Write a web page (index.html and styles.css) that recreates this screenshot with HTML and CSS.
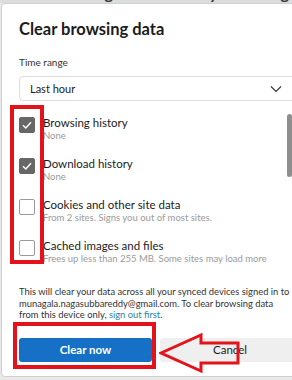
FILE: index.html
```html
<!DOCTYPE html>
<html>
<head>
<meta charset="utf-8">
<link rel="stylesheet" href="styles.css">
</head>
<body>
<div class="page">
  <div class="backdrop-top"><span class="avatar"></span><span class="bg-text">Hi Naga Subba Reddy! We are glad</span></div>
  <div class="dialog">
    <h1 class="title">Clear browsing data</h1>
    <div class="field-label">Time range</div>
    <div class="select">
      <span class="select-value">Last hour</span>
      <svg class="chev" width="12" height="8" viewBox="0 0 12 8"><path d="M1 1.5 L6 6.5 L11 1.5" fill="none" stroke="#333" stroke-width="1.1"/></svg>
    </div>
    <div class="list">
      <div class="row">
        <span class="cb checked"><svg width="16" height="16" viewBox="0 0 16 16"><path d="M4 8.2 L6.8 11 L12 5.2" fill="none" stroke="#fff" stroke-width="1.4"/></svg></span>
        <div class="row-text"><div class="row-title">Browsing history</div><div class="row-sub">None</div></div>
      </div>
      <div class="row">
        <span class="cb checked"><svg width="16" height="16" viewBox="0 0 16 16"><path d="M4 8.2 L6.8 11 L12 5.2" fill="none" stroke="#fff" stroke-width="1.4"/></svg></span>
        <div class="row-text"><div class="row-title">Download history</div><div class="row-sub">None</div></div>
      </div>
      <div class="row">
        <span class="cb"></span>
        <div class="row-text"><div class="row-title">Cookies and other site data</div><div class="row-sub">From 2 sites. Signs you out of most sites.</div></div>
      </div>
      <div class="row">
        <span class="cb"></span>
        <div class="row-text"><div class="row-title">Cached images and files</div><div class="row-sub">Frees up less than 255 MB. Some sites may load more</div></div>
      </div>
      <div class="scroll-thumb"></div>
    </div>
    <p class="note">This will clear your data across all your synced devices signed in to<br>munagala.nagasubbareddy@gmail.com. To clear browsing data<br>from this device only, <a class="link">sign out first</a>.</p>
    <div class="buttons">
      <button class="btn primary">Clear now</button>
      <button class="btn secondary">Cancel</button>
    </div>
    <div class="mark mark-checks"></div>
    <div class="mark mark-button"></div>
    <svg class="arrow" width="82" height="42" viewBox="0 0 82 42"><path d="M2 21 L42 3 L42 11 L79 11 L79 31 L42 31 L42 39 Z" fill="none" stroke="#e4121b" stroke-width="3" stroke-linejoin="miter"/></svg>
  </div>
  <div class="backdrop-bottom"><span class="bg-text2">you can visit your new tab page and set your preferences</span></div>
</div>
</body>
</html>
```
FILE: styles.css
```css
* { box-sizing: border-box; }
html, body { margin: 0; padding: 0; }
body {
  width: 292px;
  height: 380px;
  overflow: hidden;
  background: #e9e9e9;
  font-family: Lato, "Open Sans", sans-serif;
  color: #1b1b1b;
}
.page { width: 292px; height: 380px; overflow: hidden; }
.backdrop-top {
  height: 3px;
  overflow: hidden;
  display: flex;
  gap: 40px;
  padding-left: 24px;
  background: #dcdcdc;
}
.avatar { width: 16px; height: 10px; background: #5b8fa8; margin-top: -7px; }
.bg-text {
  font: 700 16px Lato, sans-serif;
  color: #333;
  margin-top: -15px;
  line-height: 16px;
  white-space: nowrap;
}
.dialog {
  position: relative;
  margin-left: 1px;
  width: 320px;
  height: 374px;
  background: #fff;
  border: 1px solid #cfcfcf;
  border-radius: 4px 0 0 4px;
  padding: 0 0 0 17px;
}
.title {
  margin: 14px 0 0;
  font-size: 16.5px;
  line-height: 22px;
  font-weight: 700;
  color: #1b1b1b;
}
.field-label {
  margin-top: 16px;
  font-size: 10px;
  line-height: 13px;
  color: #333;
}
.select {
  margin-top: 7px;
  width: 290px;
  height: 25px;
  border: 1px solid #dedede;
  border-radius: 4px;
  display: flex;
  align-items: center;
  padding-left: 10px;
  position: relative;
}
.select-value { font-size: 11px; color: #1b1b1b; }
.chev { position: absolute; left: 250px; top: 8px; }
.list {
  position: relative;
  margin-top: 15px;
  width: 273px;
  display: flex;
  flex-direction: column;
}
.row {
  display: flex;
  gap: 8px;
  height: 41px;
}
.cb {
  width: 16px;
  height: 16px;
  margin-top: 1px;
  flex: none;
  border: 1px solid #9a9a9a;
  border-radius: 2px;
  background: #fff;
}
.cb.checked { background: #676767; border-color: #676767; }
.cb svg { display: block; margin: -1px; }
.row-title { font-size: 11.5px; line-height: 14px; color: #1b1b1b; white-space: nowrap; }
.row-sub { font-size: 9.5px; line-height: 12px; color: #9a9a9a; white-space: nowrap; }
.scroll-thumb {
  position: absolute;
  left: 268px;
  top: -2px;
  width: 5px;
  height: 63px;
  border-radius: 3px;
  background: #8e8e8e;
}
.note {
  margin: 6px 0 0;
  font-size: 9.4px;
  line-height: 11.5px;
  color: #333;
  white-space: nowrap;
}
.link { color: #2a7fa8; }
.buttons {
  margin-top: 17px;
  display: flex;
  gap: 8px;
}
.btn {
  width: 133px;
  height: 24px;
  border: 0;
  border-radius: 3px;
  font-family: Lato, "Open Sans", sans-serif;
  font-size: 11.5px;
  padding: 0;
}
.primary { background: #1670c6; color: #fff; font-weight: 700; }
.secondary { background: #efefef; color: #1b1b1b; width: 140px; }
.mark {
  position: absolute;
  border: 4px solid #e4121b;
}
.mark-checks { left: 8px; top: 101px; width: 34px; height: 159px; }
.mark-button { left: 11px; top: 318px; width: 143px; height: 47px; }
.arrow { position: absolute; left: 157px; top: 328px; }
.backdrop-bottom {
  height: 4px;
  overflow: hidden;
  padding-left: 10px;
}
.bg-text2 {
  display: block;
  font-size: 10px;
  line-height: 10px;
  margin-top: 1px;
  color: #555;
  white-space: nowrap;
}
```
